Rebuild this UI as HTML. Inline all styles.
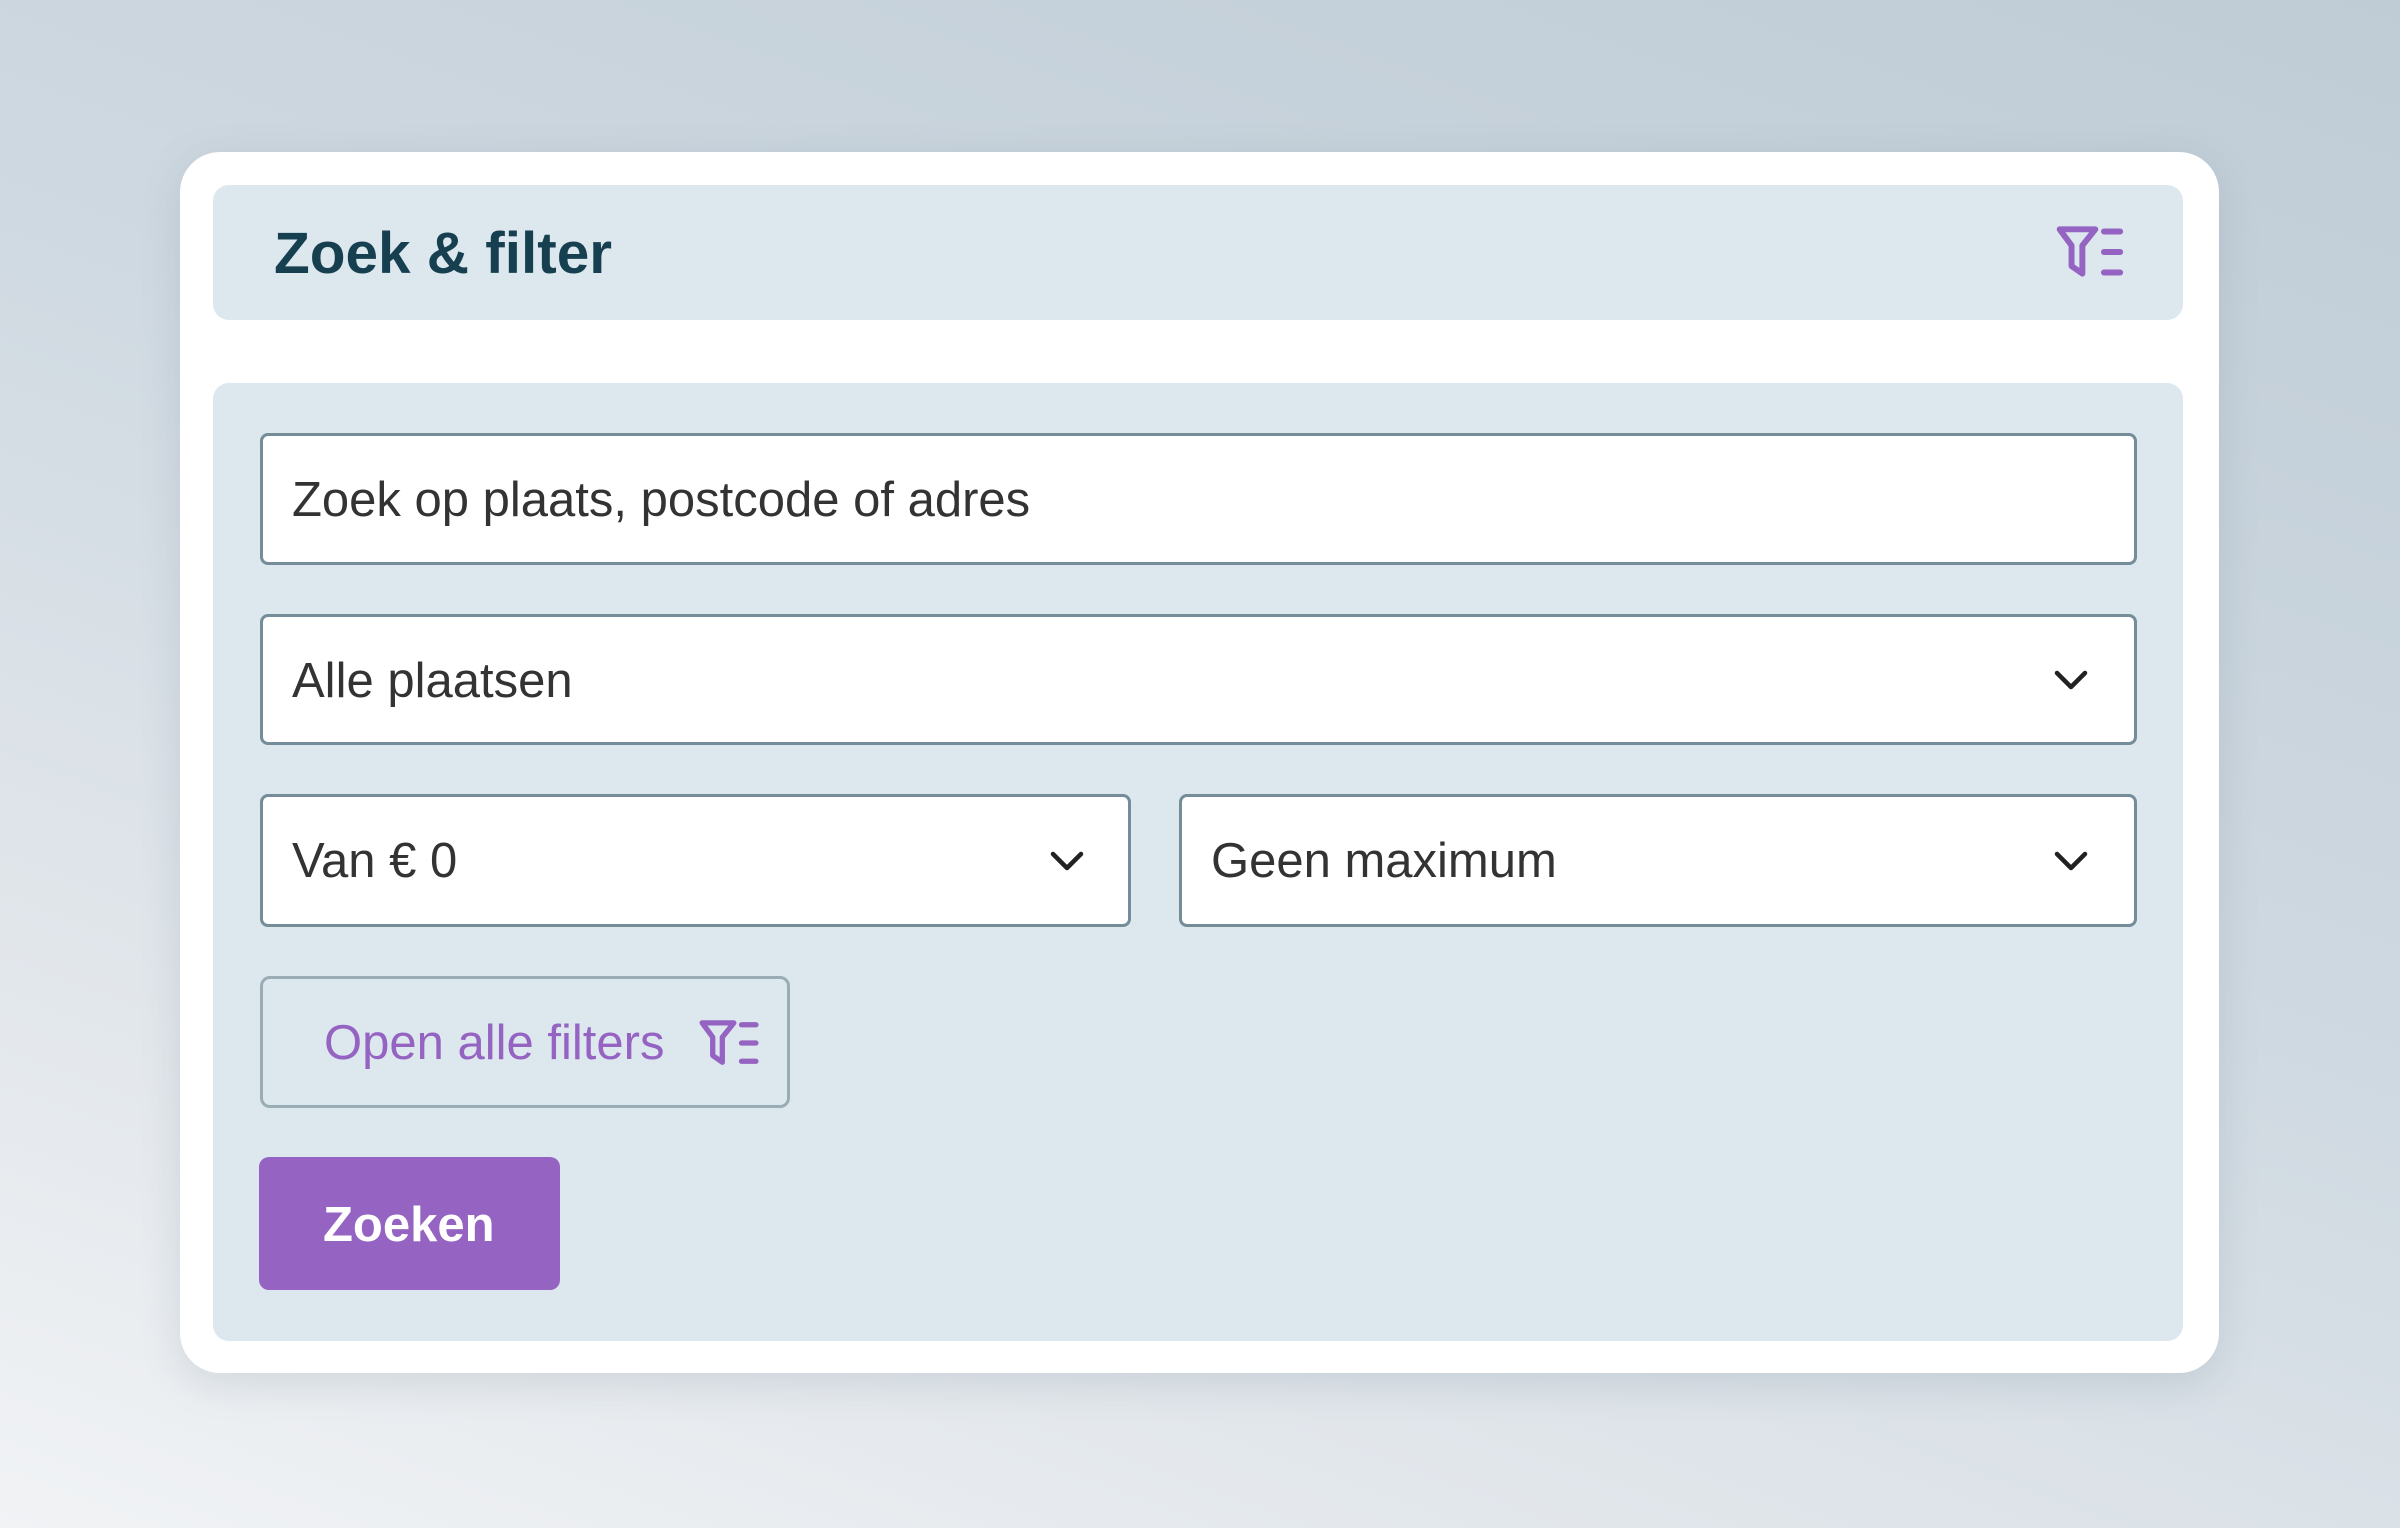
<!DOCTYPE html>
<html><head><meta charset="utf-8"><style>
*{box-sizing:border-box;margin:0;padding:0}
body{width:2400px;height:1528px;overflow:hidden;font-family:"Liberation Sans",Arial,sans-serif;
background:linear-gradient(200deg,#bfccd6 0%,#cfd9e1 45%,#e1e6eb 75%,#f1f3f5 100%);position:relative}
.abs{position:absolute}
.card{left:180px;top:152px;width:2039px;height:1221px;background:#fff;border-radius:40px;box-shadow:0 10px 40px rgba(90,110,130,.18)}
.hdr{left:213px;top:185px;width:1970px;height:135px;background:#dce7ee;border-radius:16px}
.title{left:274px;top:219px;font-size:58.5px;font-weight:bold;color:#163f50;line-height:70px}
.panel{left:213px;top:383px;width:1970px;height:958px;background:#dce7ee;border-radius:16px}
.inp{background:#fff;border:3px solid #748d99;border-radius:8px;height:132px;font-size:49px;color:#333;line-height:128px;padding-left:29px}
.chev{position:absolute;top:50%;margin-top:-11px}
.btn2{left:260px;top:976px;width:530px;height:132px;border:3px solid #9aacb4;border-radius:10px;color:#9563c1;font-size:49px;line-height:128px;padding-left:61px}
.btn{left:259px;top:1157px;width:301px;height:133px;background:#9563c1;border-radius:10px;color:#fff;font-weight:bold;font-size:49px;line-height:136px;padding-left:64px}
</style></head><body>
<div class="abs card"></div>
<div class="abs hdr"></div>
<div class="abs title">Zoek &amp; filter</div>
<svg class="abs" style="left:2056px;top:225px" width="70" height="54" viewBox="0 0 64 50"><g fill="none" stroke="#9563c1" stroke-width="5.5" stroke-linecap="round" stroke-linejoin="round"><path d="M3 4H36L24 19V45L14 38V19Z"/><path d="M44 6H59M44 25H59M44 44H59"/></g></svg>
<div class="abs panel"></div>
<div class="abs inp" style="left:260px;top:433px;width:1877px">Zoek op plaats, postcode of adres</div>
<div class="abs inp" style="left:260px;top:614px;width:1877px;height:131px">Alle plaatsen
<svg class="chev" style="right:46px" width="34" height="22" viewBox="0 0 34 22"><path d="M3 4L17 18L31 4" fill="none" stroke="#222" stroke-width="4.5" stroke-linecap="round" stroke-linejoin="round"/></svg></div>
<div class="abs inp" style="left:260px;top:794px;width:871px;height:133px">Van € 0
<svg class="chev" style="right:44px" width="34" height="22" viewBox="0 0 34 22"><path d="M3 4L17 18L31 4" fill="none" stroke="#222" stroke-width="4.5" stroke-linecap="round" stroke-linejoin="round"/></svg></div>
<div class="abs inp" style="left:1179px;top:794px;width:958px;height:133px">Geen maximum
<svg class="chev" style="right:46px" width="34" height="22" viewBox="0 0 34 22"><path d="M3 4L17 18L31 4" fill="none" stroke="#222" stroke-width="4.5" stroke-linecap="round" stroke-linejoin="round"/></svg></div>
<div class="abs btn2">Open alle filters</div>
<svg class="abs" style="left:699px;top:1019px" width="62" height="48" viewBox="0 0 64 50"><g fill="none" stroke="#9563c1" stroke-width="5.5" stroke-linecap="round" stroke-linejoin="round"><path d="M3 4H36L24 19V45L14 38V19Z"/><path d="M44 6H59M44 25H59M44 44H59"/></g></svg>
<div class="abs btn">Zoeken</div>
</body></html>
